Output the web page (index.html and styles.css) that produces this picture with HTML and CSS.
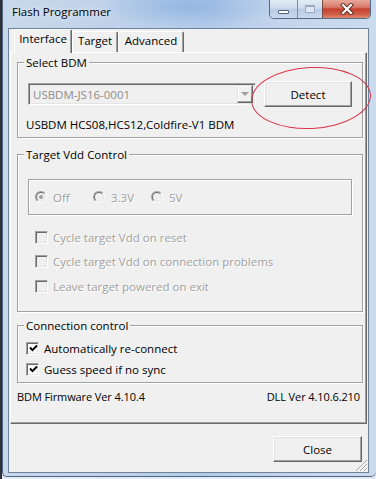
FILE: index.html
```html
<!DOCTYPE html>
<html>
<head>
<meta charset="utf-8">
<title>Flash Programmer</title>
<link rel="stylesheet" href="styles.css">
</head>
<body>
<div class="window">
  <div class="titlebar">
    <div class="title">Flash Programmer</div>
    <div class="caption">
      <div class="cbtn cmin"><span class="min-ico"></span></div>
      <div class="cbtn cmax"><span class="max-ico"></span></div>
      <div class="cbtn cclose">
        <svg width="14" height="12" viewBox="0 0 14 12">
          <path d="M3 2 L11 10 M11 2 L3 10" stroke="#5a2a24" stroke-width="4" stroke-linecap="square"/>
          <path d="M3 2 L11 10 M11 2 L3 10" stroke="#ffffff" stroke-width="2.2" stroke-linecap="square"/>
        </svg>
      </div>
    </div>
  </div>
  <div class="client">
    <div class="tabs">
      <div class="tab active">Interface</div>
      <div class="tab">Target</div>
      <div class="tab">Advanced</div>
    </div>
    <div class="panel">
      <fieldset class="group grp-bdm">
        <legend>Select BDM</legend>
        <div class="bdm-row">
          <div class="combo"><span class="combo-text">USBDM-JS16-0001</span><span class="combo-btn"><span class="tri"></span></span></div>
          <div class="btn detect">Detect</div>
        </div>
        <div class="bdm-desc">USBDM HCS08,HCS12,Coldfire-V1 BDM</div>
      </fieldset>

      <fieldset class="group grp-vdd">
        <legend>Target Vdd Control</legend>
        <div class="radio-box">
          <div class="opt"><span class="radio checked"></span><span class="dis">Off</span></div>
          <div class="opt"><span class="radio"></span><span class="dis">3.3V</span></div>
          <div class="opt"><span class="radio"></span><span class="dis">5V</span></div>
        </div>
        <div class="checks">
          <div class="check-row"><span class="cb"></span><span class="dis">Cycle target Vdd on reset</span></div>
          <div class="check-row"><span class="cb"></span><span class="dis">Cycle target Vdd on connection problems</span></div>
          <div class="check-row"><span class="cb"></span><span class="dis">Leave target powered on exit</span></div>
        </div>
      </fieldset>

      <fieldset class="group grp-conn">
        <legend>Connection control</legend>
        <div class="checks conn-checks">
          <div class="check-row conn-row"><span class="cb on"><svg width="9" height="9" viewBox="0 0 9 9"><path d="M1 3.5 L3.5 6.2 L8 1.5" fill="none" stroke="#000" stroke-width="1.9"/></svg></span><span>Automatically re-connect</span></div>
          <div class="check-row conn-row"><span class="cb on"><svg width="9" height="9" viewBox="0 0 9 9"><path d="M1 3.5 L3.5 6.2 L8 1.5" fill="none" stroke="#000" stroke-width="1.9"/></svg></span><span>Guess speed if no sync</span></div>
        </div>
      </fieldset>

      <div class="versions"><span>BDM Firmware Ver 4.10.4</span><span>DLL Ver 4.10.6.210</span></div>
    </div>
    <div class="footer">
      <div class="btn close">Close</div>
      <svg class="grip" width="13" height="13" viewBox="0 0 13 13">
        <path d="M12 1 L1 12 M12 5 L5 12 M12 9 L9 12" stroke="#a0a0a0" stroke-width="1"/>
        <path d="M12 2 L2 12 M12 6 L6 12 M12 10 L10 12" stroke="#ffffff" stroke-width="1"/>
      </svg>
    </div>
  </div>
  <div class="annot"></div>
</div>
</body>
</html>
```

FILE: styles.css
```css
* { box-sizing: border-box; }
html, body { margin: 0; padding: 0; }
body {
  width: 376px;
  height: 479px;
  overflow: hidden;
  background: linear-gradient(90deg, #2e3135 0, #2e3135 2px, #e4ebf3 2px);
  font-family: "Open Sans", "Noto Sans", sans-serif;
  font-size: 11.5px;
  color: #000;
}

.window {
  position: relative;
  margin-left: 2px;
  width: 374px;
  height: 477px;
  border-left: 1px solid #4f6785;
  border-bottom: 1px solid #4f6785;
  border-radius: 0 0 5px 5px;
  background:
    radial-gradient(ellipse 90px 22px at 185px 6px, rgba(120, 165, 222, 0.55), rgba(120, 165, 222, 0) 100%),
    linear-gradient(90deg, #c9d8ea 0%, #bfd2ea 30%, #b4cbe8 55%, #c6d7ec 80%, #cbdbee 100%);
  padding: 0 7px 3px 5px;
  display: flex;
  flex-direction: column;
}

.titlebar {
  height: 28px;
  flex: none;
  display: flex;
  justify-content: space-between;
  align-items: flex-start;
}
.title {
  padding-left: 4px;
  padding-top: 4px;
  line-height: 16px;
  font-size: 11.5px;
  color: #000;
  text-shadow: 0 0 6px rgba(255, 255, 255, 0.9);
}
.caption {
  display: flex;
  height: 19px;
  margin-right: -2px;
  border: 1px solid #52698a;
  border-top: 0;
  border-radius: 0 0 5px 5px;
  overflow: hidden;
}
.cbtn {
  height: 18px;
  display: flex;
  align-items: center;
  justify-content: center;
}
.cmin {
  width: 28px;
  border-right: 1px solid #7890b0;
  background: linear-gradient(180deg, #e3ecf7 0%, #cfdcee 45%, #b7cbe4 50%, #c9d9ee 100%);
}
.cmax {
  width: 25px;
  border-right: 1px solid #7a4a45;
  background: linear-gradient(180deg, #e3ecf7 0%, #cfdcee 45%, #b7cbe4 50%, #c9d9ee 100%);
}
.cclose {
  width: 47px;
  background: linear-gradient(180deg, #e9a99c 0%, #d77a68 40%, #c4412c 50%, #cf5f48 80%, #e08c70 100%);
}
.min-ico {
  width: 11px;
  height: 4px;
  margin-top: 6px;
  background: #fff;
  border: 1px solid #4e6078;
  border-radius: 1px;
}
.max-ico {
  width: 10px;
  height: 8px;
  border: 1px solid #9aa9bd;
  border-top-width: 2px;
  background: #dfe7f2;
}

.client {
  flex: 1;
  display: flex;
  flex-direction: column;
  background: #f0f0f0;
  border: 1px solid #6e829b;
}

.tabs {
  height: 23px;
  flex: none;
  display: flex;
  align-items: flex-end;
  padding-left: 5px;
}
.tab {
  height: 21px;
  padding-top: 1px;
  line-height: 15px;
  text-align: center;
  background: #f0f0f0;
  border-top: 1px solid #fff;
  border-left: 1px solid #fff;
  border-right: 1px solid #696969;
  box-shadow: inset -1px 0 0 #a0a0a0;
  border-radius: 2px 2px 0 0;
}
.tab:nth-child(1) { width: 58px; }
.tab:nth-child(2) { width: 46px; }
.tab:nth-child(3) { width: 66px; }
.tab.active {
  height: 24px;
  margin-bottom: -1px;
  position: relative;
  z-index: 1;
}

.panel {
  flex: none;
  width: 357px;
  height: 372px;
  margin-left: 1px;
  border-top: 1px solid #fff;
  border-left: 1px solid #fff;
  border-right: 1px solid #696969;
  border-bottom: 1px solid #696969;
  box-shadow: inset -1px -1px 0 #a0a0a0;
  padding: 2px 3px 0 6px;
  display: flex;
  flex-direction: column;
}

fieldset.group {
  margin: 0;
  min-inline-size: 0;
  padding: 0 10px;
  border: 1px solid #a0a0a0;
  box-shadow: inset 1px 1px 0 #fff, 1px 1px 0 #fff;
}
fieldset.group legend {
  line-height: 15px;
  padding: 0 2px;
  margin-left: -4px;
  background: #f0f0f0;
}

.grp-bdm { padding-bottom: 5px !important; }
.bdm-row {
  margin-top: 11px;
  height: 26px;
  display: flex;
  align-items: center;
}
.combo {
  width: 228px;
  height: 22px;
  display: flex;
  align-items: center;
  border-top: 1px solid #a0a0a0;
  border-left: 1px solid #a0a0a0;
  border-right: 1px solid #fff;
  border-bottom: 1px solid #fff;
  box-shadow: inset 1px 1px 0 #696969, inset -1px -1px 0 #e3e3e3;
  background: #f0f0f0;
  padding: 2px 2px 2px 4px;
}
.combo-text {
  flex: 1;
  color: #8d8d8d;
  line-height: 15px;
}
.combo-btn {
  width: 16px;
  height: 18px;
  border-top: 1px solid #e3e3e3;
  border-left: 1px solid #e3e3e3;
  border-right: 1px solid #696969;
  border-bottom: 1px solid #696969;
  box-shadow: inset -1px -1px 0 #a0a0a0, inset 1px 1px 0 #fff;
  display: flex;
  align-items: center;
  justify-content: center;
}
.tri {
  width: 0;
  height: 0;
  border-left: 4px solid transparent;
  border-right: 4px solid transparent;
  border-top: 4px solid #a0a0a0;
}

.btn {
  display: flex;
  align-items: center;
  justify-content: center;
  background: #f0f0f0;
  border-top: 1px solid #fff;
  border-left: 1px solid #fff;
  border-right: 1px solid #696969;
  border-bottom: 1px solid #696969;
  box-shadow: inset -1px -1px 0 #a0a0a0, inset 1px 1px 0 #e3e3e3;
  line-height: 15px;
}
.detect {
  width: 88px;
  height: 26px;
  margin-left: 8px;
}
.bdm-desc {
  margin-top: 10px;
  margin-left: -2px;
  line-height: 15px;
}

.grp-vdd {
  margin-top: 9px !important;
  padding-bottom: 12px !important;
}
.radio-box {
  margin-top: 17px;
  height: 36px;
  border: 1px solid #a0a0a0;
  box-shadow: inset 1px 1px 0 #fff, 1px 1px 0 #fff;
  display: flex;
  align-items: center;
  padding-left: 6px;
}
.opt {
  width: 58px;
  display: flex;
  align-items: center;
  line-height: 15px;
}
.radio {
  position: relative;
  width: 12px;
  height: 12px;
  margin-right: 6px;
  border-radius: 50%;
  border: 1px solid;
  border-color: #a0a0a0 #fff #fff #a0a0a0;
  background: #f0f0f0;
}
.radio::before {
  content: "";
  position: absolute;
  inset: 0;
  border-radius: 50%;
  border: 1px solid;
  border-color: #696969 #e3e3e3 #e3e3e3 #696969;
}
.radio.checked::after {
  content: "";
  position: absolute;
  left: 3px;
  top: 3px;
  width: 4px;
  height: 4px;
  border-radius: 50%;
  background: #a0a0a0;
}
.dis {
  color: #a0a0a0;
  text-shadow: 1px 1px 0 #fff;
}

.checks {
  margin-top: 10px;
  margin-left: 7px;
}
.check-row {
  height: 24.5px;
  display: flex;
  align-items: center;
  line-height: 15px;
}
.cb {
  width: 13px;
  height: 13px;
  margin-right: 5px;
  flex: none;
  border-top: 1px solid #a0a0a0;
  border-left: 1px solid #a0a0a0;
  border-right: 1px solid #fff;
  border-bottom: 1px solid #fff;
  box-shadow: inset 1px 1px 0 #696969, inset -1px -1px 0 #e3e3e3;
  background: #f0f0f0;
  display: flex;
  align-items: center;
  justify-content: center;
}
.cb.on { background: #fff; }
.cb svg { display: block; margin: 1px 0 0 1px; }

.grp-conn {
  margin-top: 6px !important;
  padding-bottom: 2px !important;
}
.conn-checks {
  margin-top: 5px;
  margin-left: -2px;
}
.conn-row { height: 21px; }

.versions {
  margin-top: 6px;
  display: flex;
  justify-content: space-between;
  line-height: 15px;
  font-size: 11px;
  letter-spacing: -0.1px;
  padding-right: 3px;
}

.footer {
  position: relative;
  flex: 1;
  display: flex;
  justify-content: flex-end;
  align-items: flex-start;
  padding-top: 12px;
  padding-right: 6px;
}
.close {
  width: 89px;
  height: 26px;
}
.grip {
  position: absolute;
  right: 0;
  bottom: 0;
}

.annot {
  position: absolute;
  left: 248px;
  top: 67px;
  width: 120px;
  height: 62px;
  border: 1.6px solid #d8394a;
  border-radius: 50%;
  transform: rotate(-3deg);
  pointer-events: none;
}
```
